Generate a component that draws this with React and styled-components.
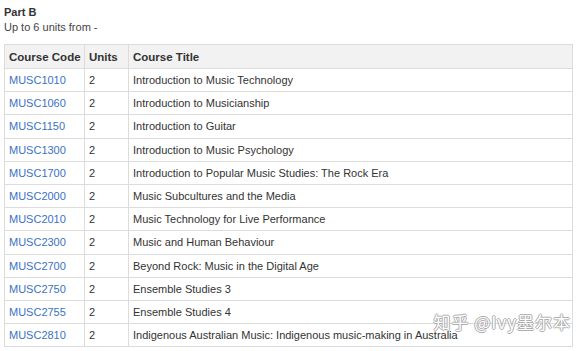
import React from "react";
import styled, { createGlobalStyle } from "styled-components";

const GlobalStyle = createGlobalStyle`
    body {
        margin: 0;
        background: #ffffff;
        font-family: "Liberation Sans", Arial, sans-serif;
        color: #333333;
    }
`;

const Page = styled.div`
    position: relative;
    width: 577px;
    height: 351px;
    padding: 5px 4px 0 4px;
    box-sizing: border-box;
    overflow: hidden;
`;

const Heading = styled.h4`
    margin: 0;
    font-size: 11px;
    font-weight: bold;
    line-height: 14px;
    color: #333;
`;

const Intro = styled.p`
    margin: 1px 0 0 0;
    font-size: 11px;
    line-height: 14px;
    color: #444;
`;

const Table = styled.table`
    margin-top: 10px;
    width: 569px;
    border-collapse: collapse;
    border: 1px solid #dcdcdc;
    font-size: 11px;
    table-layout: fixed;

    td {
        height: 22.2px;
        padding: 0 3px 0 4px;
        border: 1px solid #dcdcdc;
        color: #333;
        white-space: nowrap;
    }
`;

const Th = styled.th`
    width: ${(props) => props.$width || "auto"};
    background: #f2f2f2;
    font-weight: bold;
    font-size: 11.5px;
    text-align: left;
    height: 24px;
    padding: 1px 3px 0 4px;
    color: #333;
    border: 1px solid #dcdcdc;
    white-space: nowrap;
    box-sizing: border-box;
`;

const CodeLink = styled.a`
    color: #3a72c4;
    text-decoration: none;
`;

const Watermark = styled.div`
    position: absolute;
    right: 6px;
    bottom: 17px;
    font-family: "Noto Sans CJK SC", "Liberation Sans", sans-serif;
    font-size: 17px;
    letter-spacing: 1px;
    color: #ffffff;
    text-shadow: -1px 0 #a0a0a0, 1px 0 #a0a0a0, 0 -1px #a0a0a0, 0 1px #a0a0a0;
    opacity: 0.85;
`;

const courses = [
    ["MUSC1010", "Introduction to Music Technology"],
    ["MUSC1060", "Introduction to Musicianship"],
    ["MUSC1150", "Introduction to Guitar"],
    ["MUSC1300", "Introduction to Music Psychology"],
    ["MUSC1700", "Introduction to Popular Music Studies: The Rock Era"],
    ["MUSC2000", "Music Subcultures and the Media"],
    ["MUSC2010", "Music Technology for Live Performance"],
    ["MUSC2300", "Music and Human Behaviour"],
    ["MUSC2700", "Beyond Rock: Music in the Digital Age"],
    ["MUSC2750", "Ensemble Studies 3"],
    ["MUSC2755", "Ensemble Studies 4"],
    ["MUSC2810", "Indigenous Australian Music: Indigenous music-making in Australia"],
];

export default function App() {
    return (
        <Page>
            <GlobalStyle />
            <Heading>Part B</Heading>
            <Intro>Up to 6 units from -</Intro>
            <Table>
                <thead>
                    <tr>
                        <Th $width="80px">Course Code</Th>
                        <Th $width="44px">Units</Th>
                        <Th>Course Title</Th>
                    </tr>
                </thead>
                <tbody>
                    {courses.map(([code, title]) => (
                        <tr key={code}>
                            <td>
                                <CodeLink href="#">{code}</CodeLink>
                            </td>
                            <td>2</td>
                            <td>{title}</td>
                        </tr>
                    ))}
                </tbody>
            </Table>
            <Watermark>知乎 @Ivy墨尔本</Watermark>
        </Page>
    );
}
